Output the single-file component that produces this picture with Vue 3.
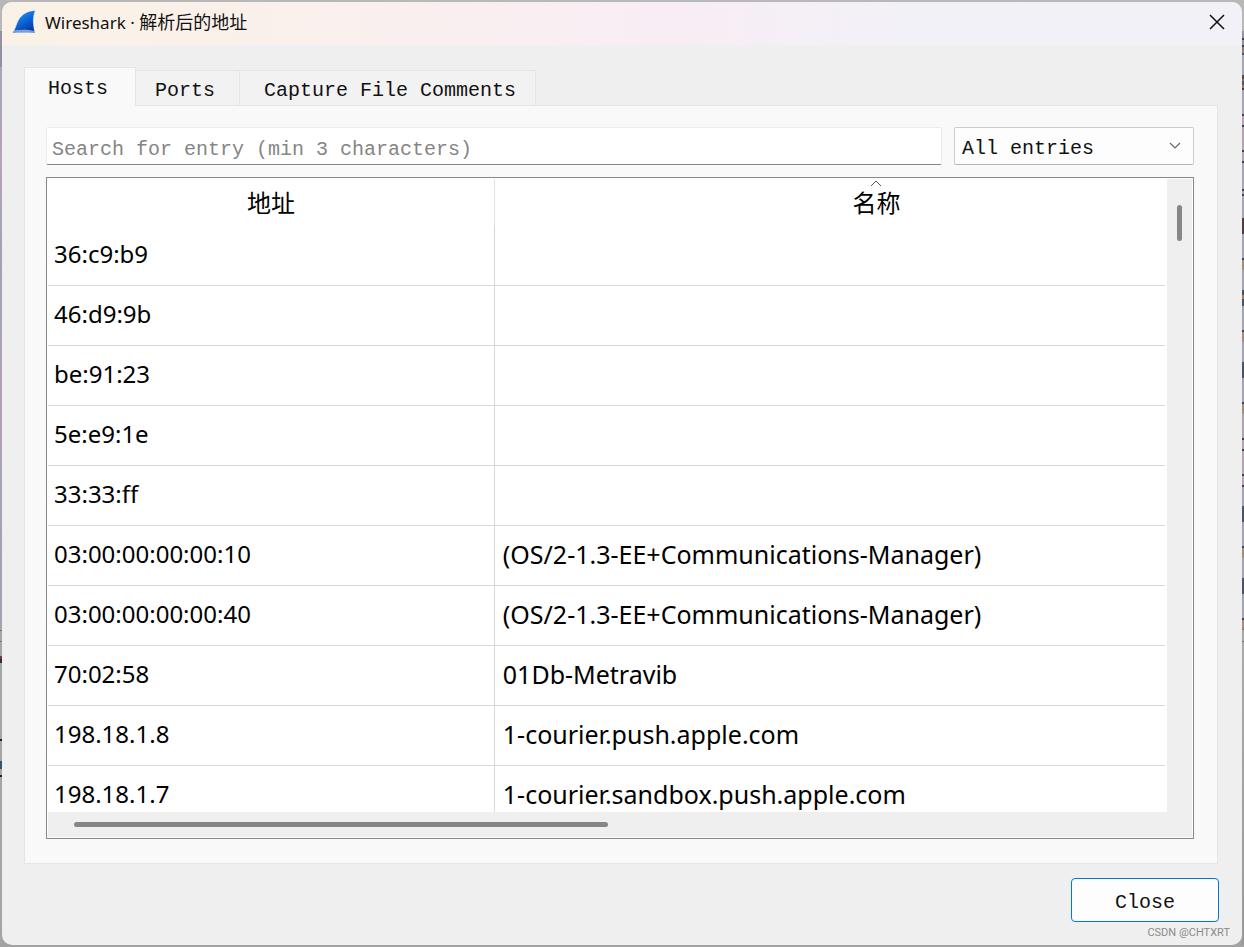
<script setup>
import { ref } from 'vue'

const tabs = ['Hosts', 'Ports', 'Capture File Comments']
const active = ref('Hosts')
const query = ref('')
const filter = ref('All entries')

const rows = [
  ['36:c9:b9', ''],
  ['46:d9:9b', ''],
  ['be:91:23', ''],
  ['5e:e9:1e', ''],
  ['33:33:ff', ''],
  ['03:00:00:00:00:10', '(OS/2-1.3-EE+Communications-Manager)'],
  ['03:00:00:00:00:40', '(OS/2-1.3-EE+Communications-Manager)'],
  ['70:02:58', '01Db-Metravib'],
  ['198.18.1.8', '1-courier.push.apple.com'],
  ['198.18.1.7', '1-courier.sandbox.push.apple.com']
]
</script>

<template>
  <div class="desktop">
    <div class="edge edge-left"></div>
    <main class="dialog">
      <header class="titlebar">
        <svg class="fin" width="24" height="24" viewBox="0 0 24 24" aria-hidden="true">
          <defs>
            <linearGradient id="fin-fill" x1="0.2" y1="0" x2="0.8" y2="1">
              <stop offset="0" stop-color="#2f95f2" />
              <stop offset="0.45" stop-color="#0b6bdc" />
              <stop offset="1" stop-color="#0536a0" />
            </linearGradient>
          </defs>
          <path d="M0.5 23C3 20 3.500 15 6.500 10C9.500 4.800 15 1 23.500 0.500C20.800 5 21.200 15 23 23Z" fill="#8ebcf0" />
          <path d="M2.500 20.500C4.500 17 5 13 7.500 9C10.500 4.500 15.500 1.500 22.800 1C20.300 6 20.500 14 22.200 21C15 19.300 9 19.300 2.500 20.500Z" fill="url(#fin-fill)" />
          <path d="M1 22.300C8 20.500 16 20.800 22.800 22.300" fill="none" stroke="#8296c4" stroke-width="1.500" />
        </svg>
        <h1>Wireshark · <span>解析后的地址</span></h1>
        <button class="dismiss" type="button" aria-label="Close window">
          <svg width="16" height="16" viewBox="0 0 16 16" aria-hidden="true">
            <path d="M1 1L15 15M15 1L1 15" fill="none" stroke="#111" stroke-width="1.500" />
          </svg>
        </button>
      </header>

      <div class="content">
        <nav class="tabs" role="tablist">
          <button
            v-for="tab in tabs"
            :key="tab"
            type="button"
            role="tab"
            class="tab"
            :class="{ active: active === tab }"
            :aria-selected="active === tab"
            @click="active = tab"
          >{{ tab }}</button>
        </nav>

        <section class="panel">
          <div class="filters">
            <input v-model="query" class="search" type="text" aria-label="Search for entry" placeholder="Search for entry (min 3 characters)">
            <div class="picker">
              <select v-model="filter" aria-label="Entry type">
                <option>All entries</option>
                <option>Hosts</option>
              </select>
              <svg class="chevron" width="12" height="8" viewBox="0 0 12 8" aria-hidden="true">
                <path d="M1 1L6 6L11 1" fill="none" stroke="#666" stroke-width="1.200" />
              </svg>
            </div>
          </div>

          <div class="frame">
            <div class="viewport">
              <table>
                <thead>
                  <tr>
                    <th scope="col" class="address">地址</th>
                    <th scope="col" class="name">
                      <svg class="sort" width="12" height="7" viewBox="0 0 12 7" aria-hidden="true">
                        <path d="M1 6L6 1L11 6" fill="none" stroke="#555" />
                      </svg>
                      名称
                    </th>
                  </tr>
                </thead>
                <tbody>
                  <tr v-for="row in rows" :key="row[0]">
                    <td>{{ row[0] }}</td>
                    <td>{{ row[1] }}</td>
                  </tr>
                </tbody>
              </table>
            </div>
            <div class="bar vertical"><div class="thumb"></div></div>
            <div class="bar horizontal"><div class="thumb"></div></div>
          </div>
        </section>

        <footer class="actions">
          <button class="close" type="button">Close</button>
        </footer>
      </div>
      <span class="credit">CSDN @CHTXRT</span>
    </main>
    <div class="edge edge-right"></div>
  </div>
</template>

<style>
body {
  background: #b5b5b5;
}
</style>

<style scoped>
.desktop {
  box-sizing: border-box;
  display: grid;
  grid-template-columns: 2px minmax(0, 1fr) 2px;
  height: 100vh;
  padding: 2px 0;
  background: linear-gradient(#b8b8b8, #a2a2a2);
}

.edge-left {
  background: linear-gradient(
    #b8b8b8 0 29px, #9191a0 29px 65px, #a9a4b8 65px, #b5a3b5 170px,
    #a3a2b3 240px, #b0a0b3 400px, #a3a2b3 560px 628px,
    #777 628px 629px, #a5a5a5 629px 639px, #777 639px 640px,
    #a5a5a5 640px 654px, #70402f 654px 657px, #29303e 657px 661px,
    #a5a5a5 661px 737px, #222 737px 739px, #a5a5a5 739px 759px,
    #39536f 759px 767px, #a5a5a5 767px 773px, #222 773px 775px, #a5a5a5 775px
  );
}

.edge-right {
  background: linear-gradient(
    #b8b8b8 0 29px, #9292a3 29px 36px, #3e4050 36px 38px,
    #9292a3 38px 43px, #3f4050 43px 45px, #8f7d7b 45px 51px,
    #46536b 51px 53px, #a6a6b7 53px 73px, #514c59 73px 77px,
    #a46f60 77px 79px, #485a72 79px 83px, #9c776d 83px 86px,
    #3e4050 86px 88px, #a7a5b9 88px 112px, #3e4050 112px 114px,
    #b6a2b6 114px 123px, #3e4050 123px 125px, #b6a2b6 125px 148px,
    #3e4050 148px 150px, #b6a2b6 150px 159px, #3e4050 159px 161px,
    #a6a5b8 161px 187px, #3e4050 187px 189px, #a6a5b8 189px 192px,
    #3e4050 192px 194px, #a6a5b8 194px 216px, #513a45 216px 232px,
    #a3a2b7 232px 256px, #3e4050 256px 258px, #a18f85 258px 268px,
    #a3a2b7 268px 288px, #49536a 288px 293px, #a3796b 293px 297px,
    #49536a 297px 304px, #a3a2b7 304px 328px, #3e4050 328px 330px,
    #a18f85 330px 340px, #a3a2b7 340px 360px, #49536a 360px 376px,
    #a3a2b7 376px 400px, #3e4050 400px 402px, #a18f85 402px 412px,
    #b0a2b5 412px 436px, #3e4050 436px 438px, #b6a2b6 438px 447px,
    #3e4050 447px 449px, #b6a2b6 449px 472px, #3e4050 472px 474px,
    #b6a2b6 474px 483px, #3e4050 483px 485px, #a8a2b8 485px 504px,
    #49536a 504px 520px, #a3a2b7 520px 544px, #3e4050 544px 546px,
    #a18f85 546px 556px, #a3a2b7 556px 576px, #49536a 576px 592px,
    #a3a2b7 592px 616px, #3e4050 616px 618px, #a18f85 618px 627px,
    #777 627px 628px, #a8a8a8 628px 639px, #777 639px 640px,
    #aaa 640px, #999
  );
}

.dialog {
  position: relative;
  display: flex;
  flex-direction: column;
  min-height: 0;
  overflow: hidden;
  border-radius: 10px;
  background: #efefef;
}

.titlebar {
  box-sizing: border-box;
  display: flex;
  flex: none;
  align-items: center;
  height: 43px;
  padding: 0 17px 3px 10px;
  background: linear-gradient(90deg, #faf2e6, #faf0ec 24%, #f8edf5 55%, #f2f1f8 75%, #f2f1f8);
}

.fin {
  flex: none;
  margin-right: 9px;
}

h1 {
  flex: 1;
  margin: 0;
  color: #111;
  font: 400 17px/24px "Noto Sans", "Noto Sans CJK SC", sans-serif;
}

h1 span {
  font-size: 18px;
}

.dismiss {
  display: flex;
  padding: 0;
  border: 0;
  background: none;
}

.content {
  display: flex;
  flex: 1;
  flex-direction: column;
  min-height: 0;
  padding: 22px 24px 23px 22px;
}

.content button,
.search,
select {
  color: #111;
  font: 20px/24px "Liberation Mono", monospace;
}

.tabs {
  display: flex;
  flex: none;
  align-items: flex-end;
}

.content .tab {
  height: 35px;
  padding: 5px 24px 0 19px;
  border: 1px solid #e5e5e5;
  border-width: 1px 1px 0 0;
  background: #f2f2f2;
}

.content .tab:last-child {
  padding: 5px 19px 0 24px;
}

.content .tab.active {
  position: relative;
  height: 39px;
  margin-bottom: -1px;
  padding: 4px 27px 0 23px;
  border-left-width: 1px;
  background: #f9f9f9;
}

.panel {
  display: flex;
  flex: 1;
  flex-direction: column;
  gap: 12px;
  min-height: 0;
  padding: 21px 23px 24px 21px;
  border: 1px solid #e5e5e5;
  background: #f9f9f9;
}

.filters {
  display: flex;
  flex: none;
  gap: 12px;
}

.search {
  box-sizing: border-box;
  flex: 1;
  min-width: 0;
  height: 38px;
  padding: 6px 5px 0;
  border: 1px solid #ececec;
  border-bottom-color: #868686;
  border-radius: 2px;
  outline: 0;
  background: #fff;
}

.search::placeholder {
  color: #858585;
  opacity: 1;
}

.picker {
  position: relative;
  flex: none;
  width: 240px;
}

select {
  box-sizing: border-box;
  width: 100%;
  height: 38px;
  padding: 5px 30px 0 7px;
  border: 1px solid #ccc;
  border-bottom-color: #b5b5b5;
  border-radius: 2px;
  appearance: none;
  background: #fdfdfd;
}

.chevron {
  position: absolute;
  top: 15px;
  right: 13px;
  pointer-events: none;
}

.frame {
  display: grid;
  flex: 1;
  grid-template-rows: minmax(0, 1fr) 25px;
  grid-template-columns: minmax(0, 1fr) 25px;
  min-height: 0;
  padding: 1px;
  border: 1px solid #868791;
  background: #fff;
}

.viewport {
  overflow: hidden;
}

table {
  width: calc(100% - 2px);
  border-spacing: 0;
  table-layout: fixed;
  color: #000;
  font: 24px/32px "Noto Sans", "Noto Sans CJK SC", sans-serif;
}

th,
td {
  box-sizing: border-box;
}

th {
  position: relative;
  height: 47px;
  padding: 1px 0 0;
  font-weight: 400;
}

.address {
  width: 40%;
  border-right: 1px solid #e2e2e2;
}

.name {
  padding-left: 93px;
}

.sort {
  position: absolute;
  top: 1px;
  left: calc(50% + 40px);
}

td {
  height: 60px;
  padding: 0 8px 3px;
  border-bottom: 1px solid #d8d8d8;
  font-size: 25px;
  white-space: nowrap;
}

td:first-child {
  padding-left: 6px;
  border-right: 1px solid #d8d8d8;
  font-size: 24px;
}

.bar {
  display: flex;
  background: #efefef;
}

.vertical {
  grid-row: 1 / 3;
  grid-column: 2;
  justify-content: center;
  padding: 26px 0;
}

.horizontal {
  grid-row: 2;
  grid-column: 1;
  align-items: center;
  padding: 0 26px;
}

.thumb {
  border-radius: 3px;
  background: #868686;
}

.vertical .thumb {
  width: 5px;
  height: 36px;
}

.horizontal .thumb {
  width: 50%;
  height: 5px;
}

.actions {
  display: flex;
  flex: none;
  justify-content: flex-end;
  margin-right: -1px;
  padding-top: 14px;
}

.content .close {
  width: 148px;
  height: 44px;
  padding: 6px 0 0;
  border: 1px solid #0078d4;
  border-radius: 4px;
  background: #fdfdfd;
}

.credit {
  position: absolute;
  right: 12px;
  bottom: 5px;
  color: #8b8b8b;
  font: 11px/14px Roboto, sans-serif;
}
</style>
